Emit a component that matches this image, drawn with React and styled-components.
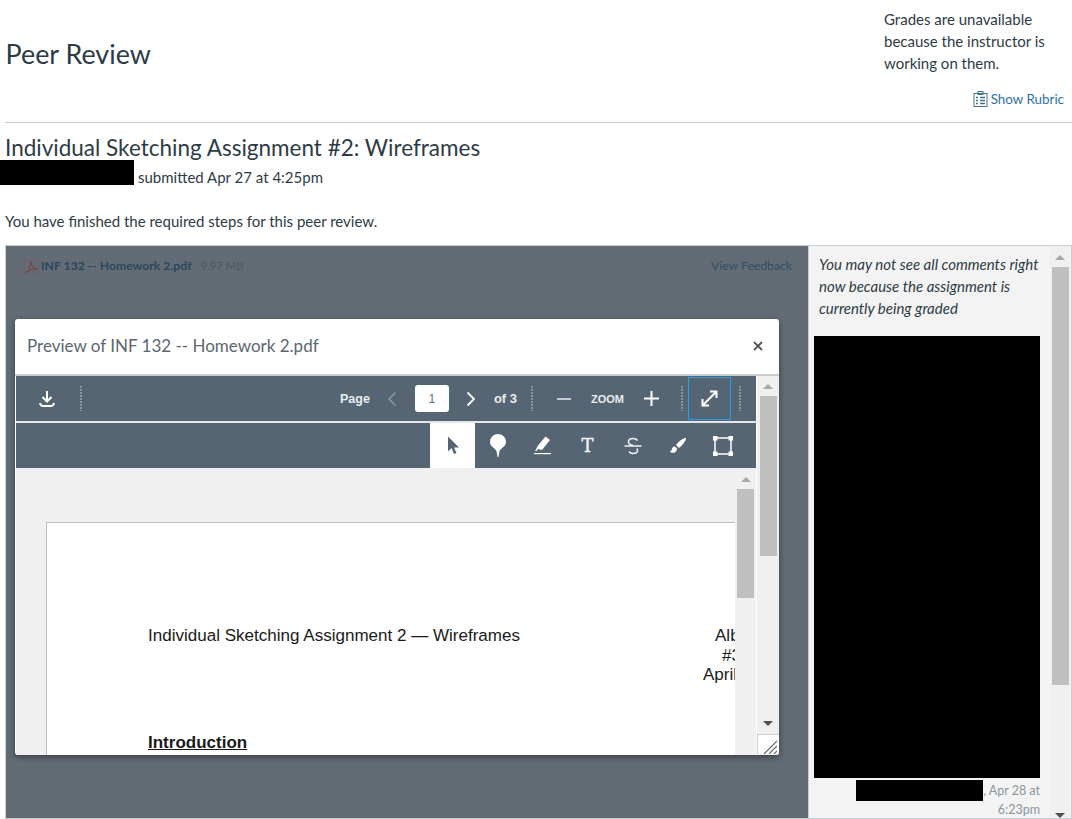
import styled, { createGlobalStyle } from "styled-components";

const Global = createGlobalStyle`
  html, body {
    margin: 0;
    padding: 0;
    background: #fff;
    overflow: hidden;
  }
  body {
    font-family: Lato, "Liberation Sans", sans-serif;
    color: #2d3b45;
  }
  * { box-sizing: border-box; }
`;

const Page = styled.div`
  width: 1072px;
  height: 819px;
  display: flex;
  flex-direction: column;
  overflow: hidden;
`;

const Header = styled.header`
  height: 123px;
  margin-left: 5px;
  border-bottom: 1px solid #c7cdd1;
  display: flex;
  justify-content: space-between;
`;

const Title = styled.h1`
  margin: 36px 0 0 0.5px;
  font-size: 26.9px;
  line-height: 36px;
  font-weight: 400;
`;

const GradeBox = styled.div`
  width: 188px;
  padding: 8px 8px 0 0;
  font-size: 15px;
  line-height: 22px;
  color: #2d3b45;
`;

const RubricLink = styled.a`
  display: flex;
  justify-content: flex-end;
  align-items: center;
  gap: 3px;
  margin-top: 16px;
  font-size: 13.4px;
  line-height: 18px;
  color: #2f6f9f;
`;

const Section = styled.section`
  padding-left: 5px;
`;

const AssignmentTitle = styled.h2`
  margin: 10px 0 0;
  font-size: 22.5px;
  line-height: 30px;
  font-weight: 400;
`;

const Meta = styled.div`
  display: flex;
  align-items: flex-end;
  gap: 4px;
  margin: -3px 0 0 -5px;
  font-size: 15px;
  line-height: 16px;
  height: 25px;
`;

const Redaction = styled.div`
  background: #000;
  flex: none;
  width: ${(p) => p.$w}px;
  height: ${(p) => p.$h}px;
`;

const Note = styled.p`
  margin: 25px 0 13px;
  font-size: 15px;
  line-height: 22px;
`;

const Frame = styled.div`
  flex: 1;
  min-height: 0;
  margin: 0 0 0 5px;
  width: 1067px;
  border: 1px solid #c7cdd1;
  display: flex;
`;

const Backdrop = styled.div`
  position: relative;
  width: 803px;
  background: #636c74;
  border-right: 1px solid #c7cdd1;
  padding: 12px 16px;
  display: flex;
  justify-content: space-between;
  align-items: flex-start;
  font-size: 12.2px;
  line-height: 16px;
`;

const FileLink = styled.div`
  display: flex;
  align-items: center;
  gap: 2px;
  margin-left: 2px;
  font-weight: 700;
  color: #28475e;
`;

const FileSize = styled.span`
  margin-left: 7px;
  font-size: 11.3px;
  font-weight: 400;
  color: #4d5860;
`;

const Feedback = styled.span`
  color: #2f4f67;
`;

const Modal = styled.div`
  position: absolute;
  left: 9px;
  top: 73px;
  width: 764px;
  height: 436px;
  background: #fff;
  border-radius: 3px;
  box-shadow: 0 2px 6px rgba(0, 0, 0, 0.45);
  display: flex;
  flex-direction: column;
  overflow: hidden;
`;

const ModalHead = styled.div`
  height: 57px;
  flex: none;
  border-bottom: 2px solid #c7cdd1;
  padding: 0 16px 2px 12px;
  display: flex;
  justify-content: space-between;
  align-items: center;
  font-size: 17px;
  color: #5b6770;
`;

const ModalBody = styled.div`
  flex: 1;
  min-height: 0;
  display: flex;
  padding-left: 1px;
`;

const Viewer = styled.div`
  width: 740px;
  flex: none;
  display: flex;
  flex-direction: column;
`;

const Toolbar = styled.div`
  height: 45px;
  flex: none;
  background: #566573;
  display: flex;
  align-items: center;
  justify-content: ${(p) => (p.$end ? "flex-end" : "flex-start")};
  padding-right: ${(p) => (p.$end ? 11 : 0)}px;
  color: #fff;
  font-family: "Liberation Sans", Arial, sans-serif;
  font-weight: 700;
  font-size: 13px;
`;

const Divider = styled.div`
  height: 2px;
  flex: none;
  background: #e4e7ea;
`;

const Cell = styled.div`
  width: ${(p) => p.$w}px;
  flex: none;
  display: flex;
  align-items: center;
  justify-content: center;
  margin-left: ${(p) => p.$ml || 0}px;
`;

const Dots = styled.div`
  width: 2px;
  height: 25px;
  flex: none;
  margin-left: ${(p) => p.$ml || 0}px;
  background: repeating-linear-gradient(to bottom, #8b96a0 0 2px, transparent 2px 3px);
`;

const Spacer = styled.div`
  flex: 1;
`;

const Label = styled.span`
  margin-left: ${(p) => p.$ml || 0}px;
  font-size: ${(p) => p.$size || 13}px;
  color: #e9edf0;
`;

const PageInput = styled.div`
  width: 34px;
  height: 27px;
  margin-left: 11px;
  background: #fff;
  border-radius: 3px;
  color: #6b7783;
  font-weight: 400;
  font-size: 13px;
  display: flex;
  align-items: center;
  justify-content: center;
`;

const ExpandButton = styled.div`
  width: 43px;
  height: 43px;
  margin-left: 5px;
  border: 1px solid #2d9fe0;
  display: flex;
  align-items: center;
  justify-content: center;
`;

const Tool = styled.div`
  width: 45px;
  height: 45px;
  display: flex;
  align-items: center;
  justify-content: center;
  background: ${(p) => (p.$active ? "#fff" : "transparent")};
`;

const SerifT = styled.span`
  font-family: "DejaVu Serif", serif;
  font-size: 18px;
  font-weight: 400;
  -webkit-text-stroke: 0.4px #f0f2f4;
  color: #f0f2f4;
`;

const DocArea = styled.div`
  flex: 1;
  min-height: 0;
  display: flex;
  background: #f0f0f0;
  overflow: hidden;
`;

const DocScroll = styled.div`
  width: 719px;
  flex: none;
  padding: 54px 0 0 30px;
  overflow: hidden;
`;

const DocPage = styled.div`
  width: 760px;
  height: 400px;
  background: #fff;
  border: 1px solid #b6bdc3;
  padding: 103px 0 0 101px;
  font-family: "Liberation Sans", Arial, sans-serif;
  color: #1a1a1a;
  font-size: 17.05px;
`;

const DocHeadRow = styled.div`
  display: flex;
  line-height: 19.5px;
  height: 107px;
`;

const DocTitle = styled.div`
  width: 555px;
  flex: none;
`;

const DocLine = styled.div`
  padding-left: ${(p) => p.$indent}px;
`;

const DocHeading = styled.div`
  font-weight: 700;
  font-size: 17px;
  line-height: 20px;
  text-decoration: underline;
`;

const Scrollbar = styled.div`
  width: ${(p) => p.$w}px;
  flex: none;
  margin-left: ${(p) => p.$ml || 0}px;
  background: #f0f0f0;
  display: flex;
  flex-direction: column;
  align-items: center;
`;

const ArrowUp = styled.div`
  margin-top: ${(p) => p.$mt}px;
  width: 0;
  height: 0;
  border-left: 5px solid transparent;
  border-right: 5px solid transparent;
  border-bottom: 5px solid #a8a8a8;
`;

const ArrowDown = styled.div`
  margin-top: ${(p) => p.$mt}px;
  width: 0;
  height: 0;
  border-left: 5px solid transparent;
  border-right: 5px solid transparent;
  border-top: 5px solid #505050;
`;

const Thumb = styled.div`
  width: 17px;
  height: ${(p) => p.$h}px;
  margin-top: ${(p) => p.$mt}px;
  background: #bfbfbf;
`;

const Grip = styled.div`
  margin-top: 8px;
  width: 22px;
  height: 20px;
  background: #fff;
  border-left: 1px solid #c7cdd1;
  border-top: 1px solid #c7cdd1;
  display: flex;
  align-items: flex-end;
  justify-content: flex-end;
  padding: 0 2px 0 0;
`;

const Comments = styled.aside`
  flex: 1;
  min-width: 0;
  display: flex;
  background: #f3f3f3;
`;

const CommentList = styled.div`
  width: 241px;
  flex: none;
  padding: 7px 0 0 5px;
`;

const CommentNote = styled.p`
  margin: 0 0 17px 5px;
  font-size: 15px;
  line-height: 22px;
  font-style: italic;
  white-space: nowrap;
`;

const Stamp = styled.div`
  width: 226px;
  margin-top: 2px;
  display: flex;
  flex-wrap: wrap;
  justify-content: flex-end;
  font-size: 12.5px;
  line-height: 18px;
  color: #8b969e;
`;

const StampText = styled.span`
  margin-top: ${(p) => p.$mt || 0}px;
`;

const Stroke = styled.svg`
  display: block;
  flex: none;
  fill: none;
  stroke: ${(p) => p.$c || "#fff"};
  stroke-width: ${(p) => p.$sw || 2};
`;

const Fill = styled.svg`
  display: block;
  flex: none;
  fill: ${(p) => p.$c || "#fff"};
`;

function RubricIcon() {
  return (
    <Stroke $c="#46708f" $sw={1} width="15" height="16" viewBox="0 0 15 16">
      <rect x="1" y="2.5" width="13" height="13" />
      <rect x="5" y="0.5" width="5" height="3" />
      <path d="M3 6.5h2M7 6.5h5M3 9.5h2M7 9.5h5M3 12.5h2M7 12.5h5" strokeWidth="1.6" />
    </Stroke>
  );
}

function PdfIcon() {
  return (
    <Stroke $c="#7a3a3f" $sw={1} width="15" height="15" viewBox="0 0 15 15">
      <rect x="0.5" y="0.5" width="14" height="14" stroke="#6f6068" />
      <path d="M1.5 13.5c3-1 5-5 5.5-11 .5 5 3 7 6.500 7.500-4-.5-8 1-12 3.500z" />
    </Stroke>
  );
}

function App() {
  return (
    <Page>
      <Global />
      <Header>
        <Title>Peer Review</Title>
        <GradeBox>
          Grades are unavailable because the instructor is working on them.
          <RubricLink>
            <RubricIcon />
            Show Rubric
          </RubricLink>
        </GradeBox>
      </Header>
      <Section>
        <AssignmentTitle>Individual Sketching Assignment #2: Wireframes</AssignmentTitle>
        <Meta>
          <Redaction $w={134} $h={25} />
          submitted Apr 27 at 4:25pm
        </Meta>
        <Note>You have finished the required steps for this peer review.</Note>
      </Section>
      <Frame>
        <Backdrop>
          <FileLink>
            <PdfIcon />
            INF 132 -- Homework 2.pdf
            <FileSize>9.97 MB</FileSize>
          </FileLink>
          <Feedback>View Feedback</Feedback>
          <Modal>
            <ModalHead>
              Preview of INF 132 -- Homework 2.pdf
              <Stroke $c="#555" $sw={1.8} width="10" height="10" viewBox="0 0 10 10">
                <path d="M1 1l8 8M9 1l-8 8" />
              </Stroke>
            </ModalHead>
            <ModalBody>
              <Viewer>
                <Toolbar>
                  <Cell $w={62}>
                    <Stroke width="18" height="18" viewBox="0 0 18 18">
                      <path d="M9 1v10M4.500 7l4.500 4.500L13.500 7M2 13c.5 2.500 2 3 3 3h8c1 0 2.500-.5 3-3" />
                    </Stroke>
                  </Cell>
                  <Dots $ml={2} />
                  <Spacer />
                  <Label $size={12.5}>Page</Label>
                  <Cell $w={24} $ml={10}>
                    <Stroke $c="#8b97a2" $sw={1.5} width="10" height="16" viewBox="0 0 10 16">
                      <path d="M8.500 1.500L2 8l6.500 6.500" />
                    </Stroke>
                  </Cell>
                  <PageInput>1</PageInput>
                  <Cell $w={24} $ml={10}>
                    <Stroke $sw={1.8} width="10" height="16" viewBox="0 0 10 16">
                      <path d="M1.500 1.500L8 8l-6.500 6.500" />
                    </Stroke>
                  </Cell>
                  <Label $ml={11}>of 3</Label>
                  <Dots $ml={14} />
                  <Cell $w={30} $ml={16}>
                    <Stroke $c="#e9edf0" $sw={1.5} width="14" height="4" viewBox="0 0 14 4">
                      <path d="M0 2h14" />
                    </Stroke>
                  </Cell>
                  <Label $ml={12} $size={11}>ZOOM</Label>
                  <Cell $w={30} $ml={12}>
                    <Stroke width="15" height="15" viewBox="0 0 15 15">
                      <path d="M0 7.500h15M7.500 0v15" />
                    </Stroke>
                  </Cell>
                  <Dots $ml={15} />
                  <ExpandButton>
                    <Stroke width="17" height="17" viewBox="0 0 17 17">
                      <path d="M2 15L15 2M9 1.500h6.500V8M1.500 9v6.500H8" />
                    </Stroke>
                  </ExpandButton>
                  <Dots $ml={8} />
                  <Cell $w={15} />
                </Toolbar>
                <Divider />
                <Toolbar $end>
                  <Tool $active>
                    <Fill $c="#566573" width="14" height="19" viewBox="0 0 14 19">
                      <path d="M2 0.500v15l3.500-3.500 2.500 6 2.500-1-2.500-5.500H13z" />
                    </Fill>
                  </Tool>
                  <Tool>
                    <Fill width="16" height="23" viewBox="0 0 16 23">
                      <path d="M8 0a8 8 0 0 0-8 8c0 4.500 5 6 6.500 9l1 6h1l1-6c1.500-3 6.500-4.500 6.500-9a8 8 0 0 0-8-8z" />
                    </Fill>
                  </Tool>
                  <Tool>
                    <Fill width="17" height="19" viewBox="0 0 17 19">
                      <path d="M11.500 0.500l4.500 3.500-8 10-4-1-1.500 2H1l3-5.500z" />
                      <rect x="0" y="17" width="17" height="1.2" />
                    </Fill>
                  </Tool>
                  <Tool>
                    <SerifT>T</SerifT>
                  </Tool>
                  <Tool>
                    <Stroke $c="#f0f2f4" $sw={1.5} width="18" height="18" viewBox="0 0 18 18">
                      <path d="M0.500 9h17M13.500 3.500C12.500 2 11 1.500 9 1.500c-2.500 0-4.500 1-4.500 3.200 0 1.800 1.500 3 4.500 3.800M5 14.500c1 1.500 2.500 2 4 2 2.500 0 4.500-1 4.500-3 0-.8-.2-1.500-.8-2" />
                    </Stroke>
                  </Tool>
                  <Tool>
                    <Fill width="18" height="18" viewBox="0 0 18 18">
                      <path d="M16 1c-3 1-6.500 3.500-9 7l3 3c3-2.500 6-6 7-9 .2-.8-.2-1.200-1-1zM6 9.500c-2.500 0-3 2-3.500 3.500-.3 1-1 1.500-2 1.800 2 1.200 5 1.500 6.500-.3 1-1.200 1-2.200.8-3.200z" />
                    </Fill>
                  </Tool>
                  <Tool>
                    <Fill width="20" height="20" viewBox="0 0 20 20">
                      <path d="M2 2h16v16H2z" fill="none" stroke="#fff" strokeWidth="1.5" />
                      <rect x="0" y="0" width="4.5" height="4.5" />
                      <rect x="15.500" y="0" width="4.5" height="4.5" />
                      <rect x="0" y="15.500" width="4.5" height="4.5" />
                      <rect x="15.500" y="15.500" width="4.5" height="4.5" />
                    </Fill>
                  </Tool>
                </Toolbar>
                <DocArea>
                  <DocScroll>
                    <DocPage>
                      <DocHeadRow>
                        <DocTitle>Individual Sketching Assignment 2 — Wireframes</DocTitle>
                        <div>
                          <DocLine $indent={12}>Albert</DocLine>
                          <DocLine $indent={19}>#3</DocLine>
                          <DocLine $indent={0}>April</DocLine>
                        </div>
                      </DocHeadRow>
                      <DocHeading>Introduction</DocHeading>
                    </DocPage>
                  </DocScroll>
                  <Scrollbar $w={21}>
                    <ArrowUp $mt={9} />
                    <Thumb $mt={7} $h={109} />
                  </Scrollbar>
                </DocArea>
              </Viewer>
              <Scrollbar $w={22} $ml={1}>
                <ArrowUp $mt={8} />
                <Thumb $mt={7} $h={160} />
                <ArrowDown $mt={165} />
                <Grip>
                  <Stroke $c="#666" $sw={1.2} width="14" height="14" viewBox="0 0 14 14">
                    <path d="M1 14L14 1M6 14l8-8M11 14l3-3" />
                  </Stroke>
                </Grip>
              </Scrollbar>
            </ModalBody>
          </Modal>
        </Backdrop>
        <Comments>
          <CommentList>
            <CommentNote>
              You may not see all comments right
              <br />
              now because the assignment is
              <br />
              currently being graded
            </CommentNote>
            <Redaction $w={226} $h={442} />
            <Stamp>
              <Redaction $w={127} $h={21} />
              <StampText $mt={2}>, Apr 28 at</StampText>
              <StampText>6:23pm</StampText>
            </Stamp>
          </CommentList>
          <Scrollbar $w={20}>
            <ArrowUp $mt={9} />
            <Thumb $mt={7} $h={418} />
            <ArrowDown $mt={128} />
          </Scrollbar>
        </Comments>
      </Frame>
    </Page>
  );
}

export default App;
